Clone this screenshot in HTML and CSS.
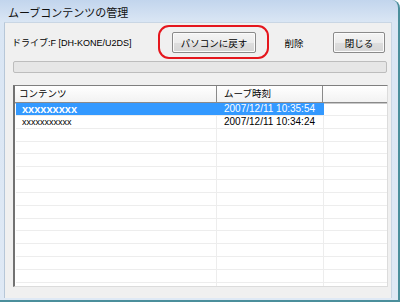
FILE: index.html
```html
<!DOCTYPE html>
<html lang="ja">
<head>
    <meta charset="UTF-8">
    <title>ムーブコンテンツの管理</title>
    <link rel="stylesheet" href="styles.css">
</head>
<body>
    <div class="window">
        <div class="titlebar">ムーブコンテンツの管理</div>

        <div class="client">
            <div class="toolbar">
                <span class="drive">ドライブ:F [DH-KONE/U2DS]</span>
                <div class="buttons">
                    <span class="ring-wrap">
                        <button class="btn btn-back">パソコンに戻す</button>
                        <span class="ring"></span>
                    </span>
                    <button class="btn btn-flat">削除</button>
                    <button class="btn btn-close">閉じる</button>
                </div>
            </div>

            <div class="progress"></div>

            <div class="list">
                <div class="list-head">
                    <div class="cell c1">コンテンツ</div>
                    <div class="cell c2">ムーブ時刻</div>
                    <div class="cell c3"></div>
                </div>
                <div class="row selected">
                    <div class="cell c1 big">xxxxxxxxx</div>
                    <div class="cell c2">2007/12/11 10:35:54</div>
                    <div class="cell c3"></div>
                </div>
                <div class="row">
                    <div class="cell c1">xxxxxxxxxxx</div>
                    <div class="cell c2">2007/12/11 10:34:24</div>
                    <div class="cell c3"></div>
                </div>
                <!-- 空の行 -->
                <div class="row"><div class="cell c1"></div><div class="cell c2"></div><div class="cell c3"></div></div>
                <div class="row"><div class="cell c1"></div><div class="cell c2"></div><div class="cell c3"></div></div>
                <div class="row"><div class="cell c1"></div><div class="cell c2"></div><div class="cell c3"></div></div>
                <div class="row"><div class="cell c1"></div><div class="cell c2"></div><div class="cell c3"></div></div>
                <div class="row"><div class="cell c1"></div><div class="cell c2"></div><div class="cell c3"></div></div>
                <div class="row"><div class="cell c1"></div><div class="cell c2"></div><div class="cell c3"></div></div>
                <div class="row"><div class="cell c1"></div><div class="cell c2"></div><div class="cell c3"></div></div>
                <div class="row"><div class="cell c1"></div><div class="cell c2"></div><div class="cell c3"></div></div>
                <div class="row"><div class="cell c1"></div><div class="cell c2"></div><div class="cell c3"></div></div>
                <div class="row"><div class="cell c1"></div><div class="cell c2"></div><div class="cell c3"></div></div>
                <div class="row"><div class="cell c1"></div><div class="cell c2"></div><div class="cell c3"></div></div>
                <div class="row"><div class="cell c1"></div><div class="cell c2"></div><div class="cell c3"></div></div>
                <div class="row"><div class="cell c1"></div><div class="cell c2"></div><div class="cell c3"></div></div>
            </div>
        </div>
    </div>
</body>
</html>
```

FILE: styles.css
```css
body {
    margin: 0;
    background-color: #fff;
    font-family: "Liberation Sans", "Noto Sans CJK JP", sans-serif;
    color: #111;
}

.window {
    box-sizing: border-box;
    width: 400px;
    height: 302px;
    display: flex;
    flex-direction: column;
    background: linear-gradient(to bottom, #c2d5ed 0px, #dae6f4 22px, #dfe9f5 100%);
    border-right: 2px solid #4b8f9c;
    border-bottom: 2px solid #4b8f9c;
    border-top-right-radius: 8px;
    overflow: hidden;
}

.titlebar {
    height: 22px;
    line-height: 22px;
    padding: 1px 0 0 8px;
    box-sizing: border-box;
    font-family: "Noto Sans CJK JP", sans-serif;
    font-size: 11px;
    color: #111;
}

.client {
    flex: 1;
    margin: 0 6px 2px 4px;
    background-color: #f0f0f0;
    border-left: 1px solid #b7c7d8;
    border-right: 1px solid #c9d6e4;
    border-top: 1px solid #c9d6e4;
    display: flex;
    flex-direction: column;
}

.toolbar {
    display: flex;
    align-items: center;
    padding: 9px 6px 0 7px;
}

.drive {
    font-size: 9px;
    color: #000;
}

.buttons {
    margin-left: auto;
    display: flex;
    align-items: center;
}

.btn {
    box-sizing: border-box;
    height: 21px;
    padding: 0;
    font-family: "Noto Sans CJK JP", sans-serif;
    font-size: 9.5px;
    color: #000;
    border: 1px solid #8a8a8a;
    border-radius: 2px;
    background: linear-gradient(to bottom, #f4f4f4 0%, #ececec 50%, #dedede 51%, #d6d6d6 100%);
    box-shadow: inset 0 0 0 1px #fbfbfb;
}

.btn-back {
    width: 84px;
}

.btn-flat {
    width: 56px;
    margin-left: 10px;
    border-color: transparent;
    background: transparent;
    box-shadow: none;
}

.btn-close {
    width: 52px;
    margin-left: 11px;
}

.ring-wrap {
    position: relative;
    display: flex;
}

.ring {
    position: absolute;
    top: -7px;
    bottom: -6px;
    left: -14px;
    right: -13px;
    border: 2px solid #e5161d;
    border-radius: 11px;
}

.progress {
    height: 12px;
    box-sizing: border-box;
    margin: 8px 4px 0 8px;
    border: 1px solid #bdbdbd;
    border-radius: 2px;
    background-color: #e6e6e6;
}

.list {
    box-sizing: border-box;
    height: 202px;
    margin: 12px 3px 0 8px;
    background-color: #fff;
    border-top: 1px solid #7f7f7f;
    border-left: 2px solid #727272;
    border-right: 1px solid #dcdcdc;
    border-bottom: 1px solid #dcdcdc;
    overflow: hidden;
}

.list-head {
    display: flex;
    height: 17px;
    box-sizing: border-box;
    border-bottom: 1px solid #8a8a8a;
    box-shadow: 0 1px 0 #c8c8c8;
    background: linear-gradient(to bottom, #ffffff, #f2f2f2);
    font-family: "Noto Sans CJK JP", sans-serif;
    font-size: 9.5px;
    line-height: 15px;
    color: #000;
}

.list-head .c1 {
    width: 202px;
    padding-left: 4px;
    border-right: 1px solid #8a8a8a;
}

.list-head .c2 {
    width: 106px;
    padding-left: 7px;
    border-right: 1px solid #8a8a8a;
}

.cell {
    box-sizing: border-box;
    white-space: nowrap;
    overflow: hidden;
}

.c3 {
    flex: 1;
}

.row {
    display: flex;
    height: 12.85px;
    box-sizing: border-box;
    margin-left: 1px;
    border-bottom: 1px solid #ededed;
    font-size: 10px;
    line-height: 12px;
    color: #000;
}

.row .c1 {
    width: 201px;
    padding-left: 6px;
    font-size: 9px;
    border-right: 1px solid #ededed;
}

.row .c2 {
    width: 107px;
    padding-left: 7px;
    border-right: 1px solid #ededed;
}

.row.selected .c1,
.row.selected .c2 {
    background-color: #3399ff;
    color: #fff;
    border-right-color: #3399ff;
}

.row .c1.big {
    font-size: 11px;
    font-weight: bold;
}
```
